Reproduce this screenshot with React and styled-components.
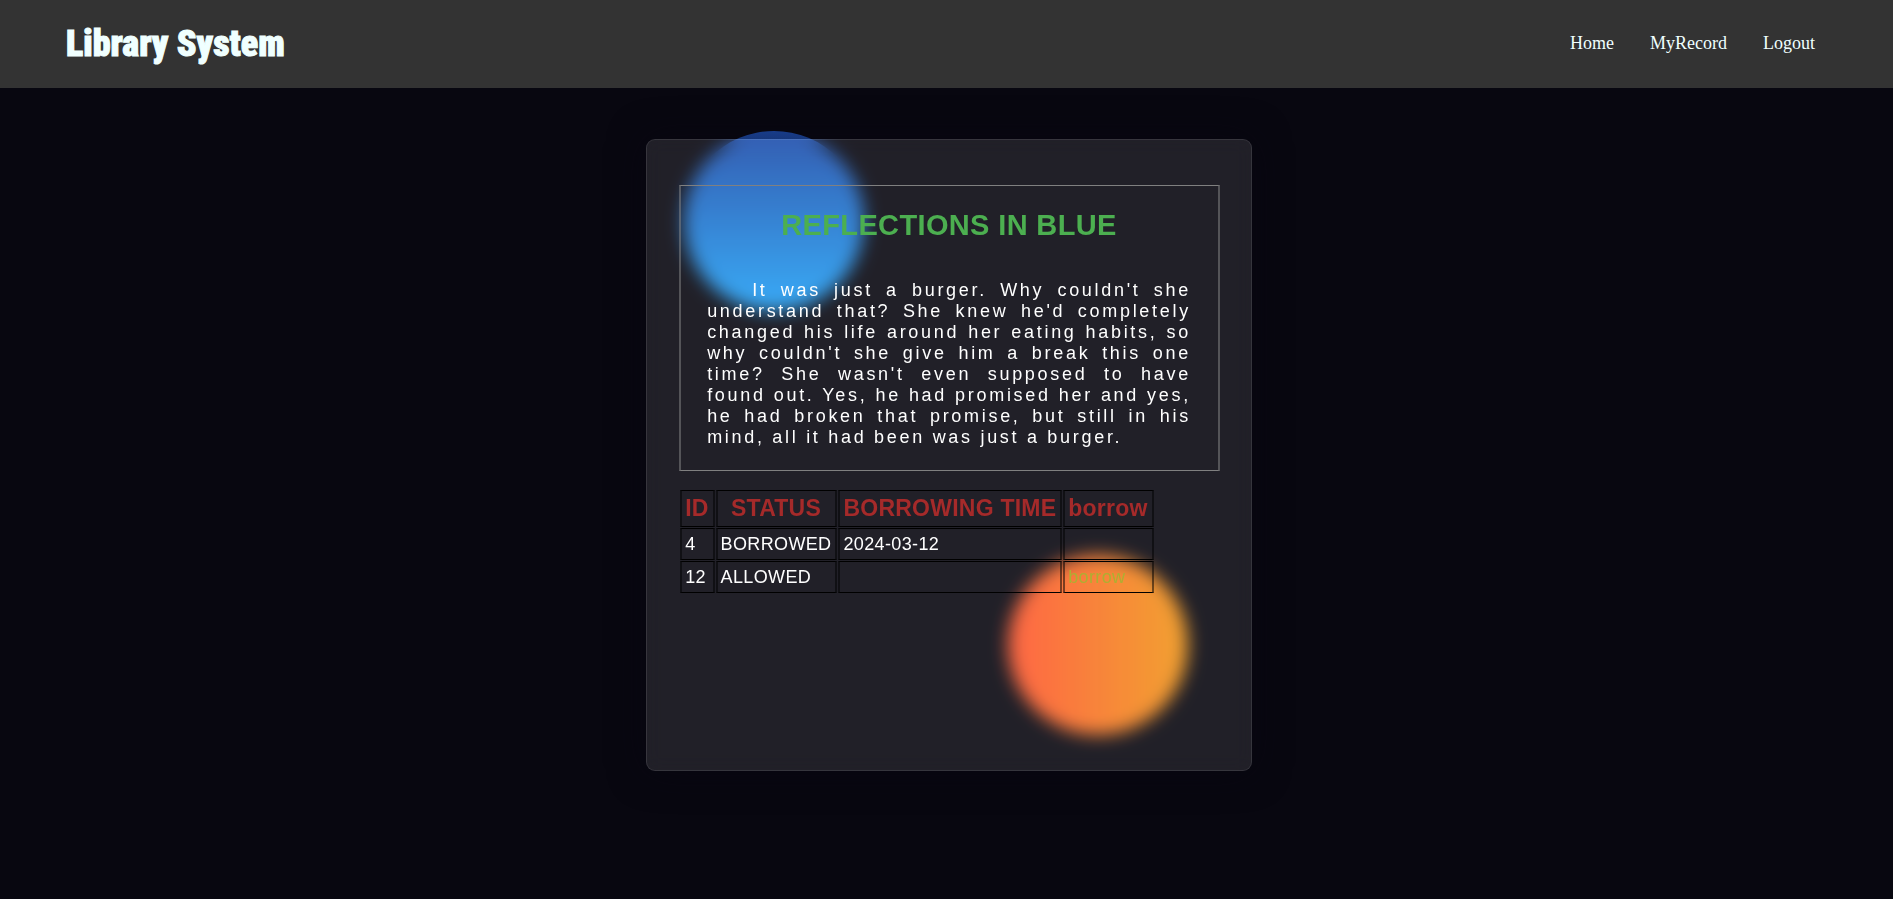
import React from 'react';
import styled, { createGlobalStyle } from 'styled-components';

const GlobalStyle = createGlobalStyle`
  *, *::before, *::after { box-sizing: border-box; }
  body {
    margin: 0;
    background: #080710;
    color: #ffffff;
    font-family: Arial, "Liberation Sans", sans-serif;
    font-size: 18px;
  }
`;

const Header = styled.header`
  display: flex;
  align-items: center;
  justify-content: space-between;
  height: 88px;
  padding: 0 60px 0 66px;
  background: #333333;
  color: azure;
`;

const Logo = styled.h1`
  margin: 0;
  font-family: Impact, "Roboto Condensed", "Liberation Sans Narrow", "Liberation Sans", sans-serif;
  font-size: 36px;
  font-weight: 900;
  -webkit-text-stroke: 1px azure;
`;

const Nav = styled.nav`
  display: flex;
`;

const NavLink = styled.a`
  padding: 0 18px 2px;
  color: inherit;
  font-family: "Times New Roman", "Liberation Serif", serif;
  font-size: 18px;
  text-decoration: none;
`;

const Main = styled.main`
  display: flex;
  justify-content: center;
  padding: 51px 0;
`;

const Stage = styled.div`
  position: relative;
  width: 32%;
  min-width: 560px;
  margin-left: 5px;
`;

const Circle = styled.div`
  position: absolute;
  width: 180px;
  height: 180px;
  border-radius: 50%;
`;

const BlueCircle = styled(Circle)`
  top: -8px;
  left: 38px;
  background: linear-gradient(#1d4aa8, #23a2f6);
`;

const OrangeCircle = styled(Circle)`
  right: 64px;
  bottom: 36px;
  background: linear-gradient(to right, #ff5530, #f09819);
`;

const Card = styled.section`
  position: relative;
  min-height: 632px;
  padding: 45px 31px 45px 32px;
  border: 1px solid rgba(255, 255, 255, 0.1);
  border-radius: 9px;
  background: rgba(255, 255, 255, 0.1);
  backdrop-filter: blur(9px);
  box-shadow: 0 0 36px rgba(8, 7, 16, 0.6);
  letter-spacing: 0.02em;
`;

const Book = styled.article`
  padding: 20px 27px 22px 26px;
  border: solid #808080;
  border-width: 1px 2px;
  border-left-color: rgba(136, 136, 136, 0.5);
  border-right-color: rgba(136, 136, 136, 0.5);
`;

const Title = styled.h2`
  margin: 0 0 36px;
  color: #4caf50;
  font-size: 29px;
  line-height: 38px;
  text-align: center;
  text-transform: uppercase;
`;

const Summary = styled.p`
  margin: 0;
  line-height: 21px;
  letter-spacing: 0.15em;
  text-align: justify;
  text-indent: 45px;
`;

const Table = styled.table`
  margin-top: 18px;
  border-spacing: 1px;
`;

const cell = `
  border: solid #000000;
  border-width: 1px 2px;
  border-left-color: rgba(0, 0, 0, 0.5);
  border-right-color: rgba(0, 0, 0, 0.5);
`;

const HeadCell = styled.th`
  ${cell}
  height: 37px;
  padding: 0 4px 0 3px;
  color: brown;
  font-size: 23px;
  letter-spacing: 0.01em;
`;

const Cell = styled.td`
  ${cell}
  height: 32px;
  padding: 0 4px 0 3px;
`;

const BorrowLink = styled.a`
  color: #adaf32;
  text-decoration: none;
`;

const links = ['Home', 'MyRecord', 'Logout'];
const copies = [
  { id: 4, status: 'BORROWED', time: '2024-03-12' },
  { id: 12, status: 'ALLOWED', time: '' },
];

export default function App() {
  return (
    <>
      <GlobalStyle />
      <Header>
        <Logo>Library System</Logo>
        <Nav>
          {links.map((label) => (
            <NavLink key={label} href="#">{label}</NavLink>
          ))}
        </Nav>
      </Header>
      <Main>
        <Stage>
          <BlueCircle />
          <OrangeCircle />
          <Card>
            <Book>
              <Title>Reflections in Blue</Title>
              <Summary>
                It was just a burger. Why couldn't she understand that? She knew he'd
                completely changed his life around her eating habits, so why couldn't she
                give him a break this one time? She wasn't even supposed to have found out.
                Yes, he had promised her and yes, he had broken that promise, but still in
                his mind, all it had been was just a burger.
              </Summary>
            </Book>
            <Table>
              <thead>
                <tr>
                  <HeadCell scope="col">ID</HeadCell>
                  <HeadCell scope="col">STATUS</HeadCell>
                  <HeadCell scope="col">BORROWING TIME</HeadCell>
                  <HeadCell scope="col">borrow</HeadCell>
                </tr>
              </thead>
              <tbody>
                {copies.map(({ id, status, time }) => (
                  <tr key={id}>
                    <Cell>{id}</Cell>
                    <Cell>{status}</Cell>
                    <Cell>{time}</Cell>
                    <Cell>{status === 'ALLOWED' && <BorrowLink href="#">borrow</BorrowLink>}</Cell>
                  </tr>
                ))}
              </tbody>
            </Table>
          </Card>
        </Stage>
      </Main>
    </>
  );
}
